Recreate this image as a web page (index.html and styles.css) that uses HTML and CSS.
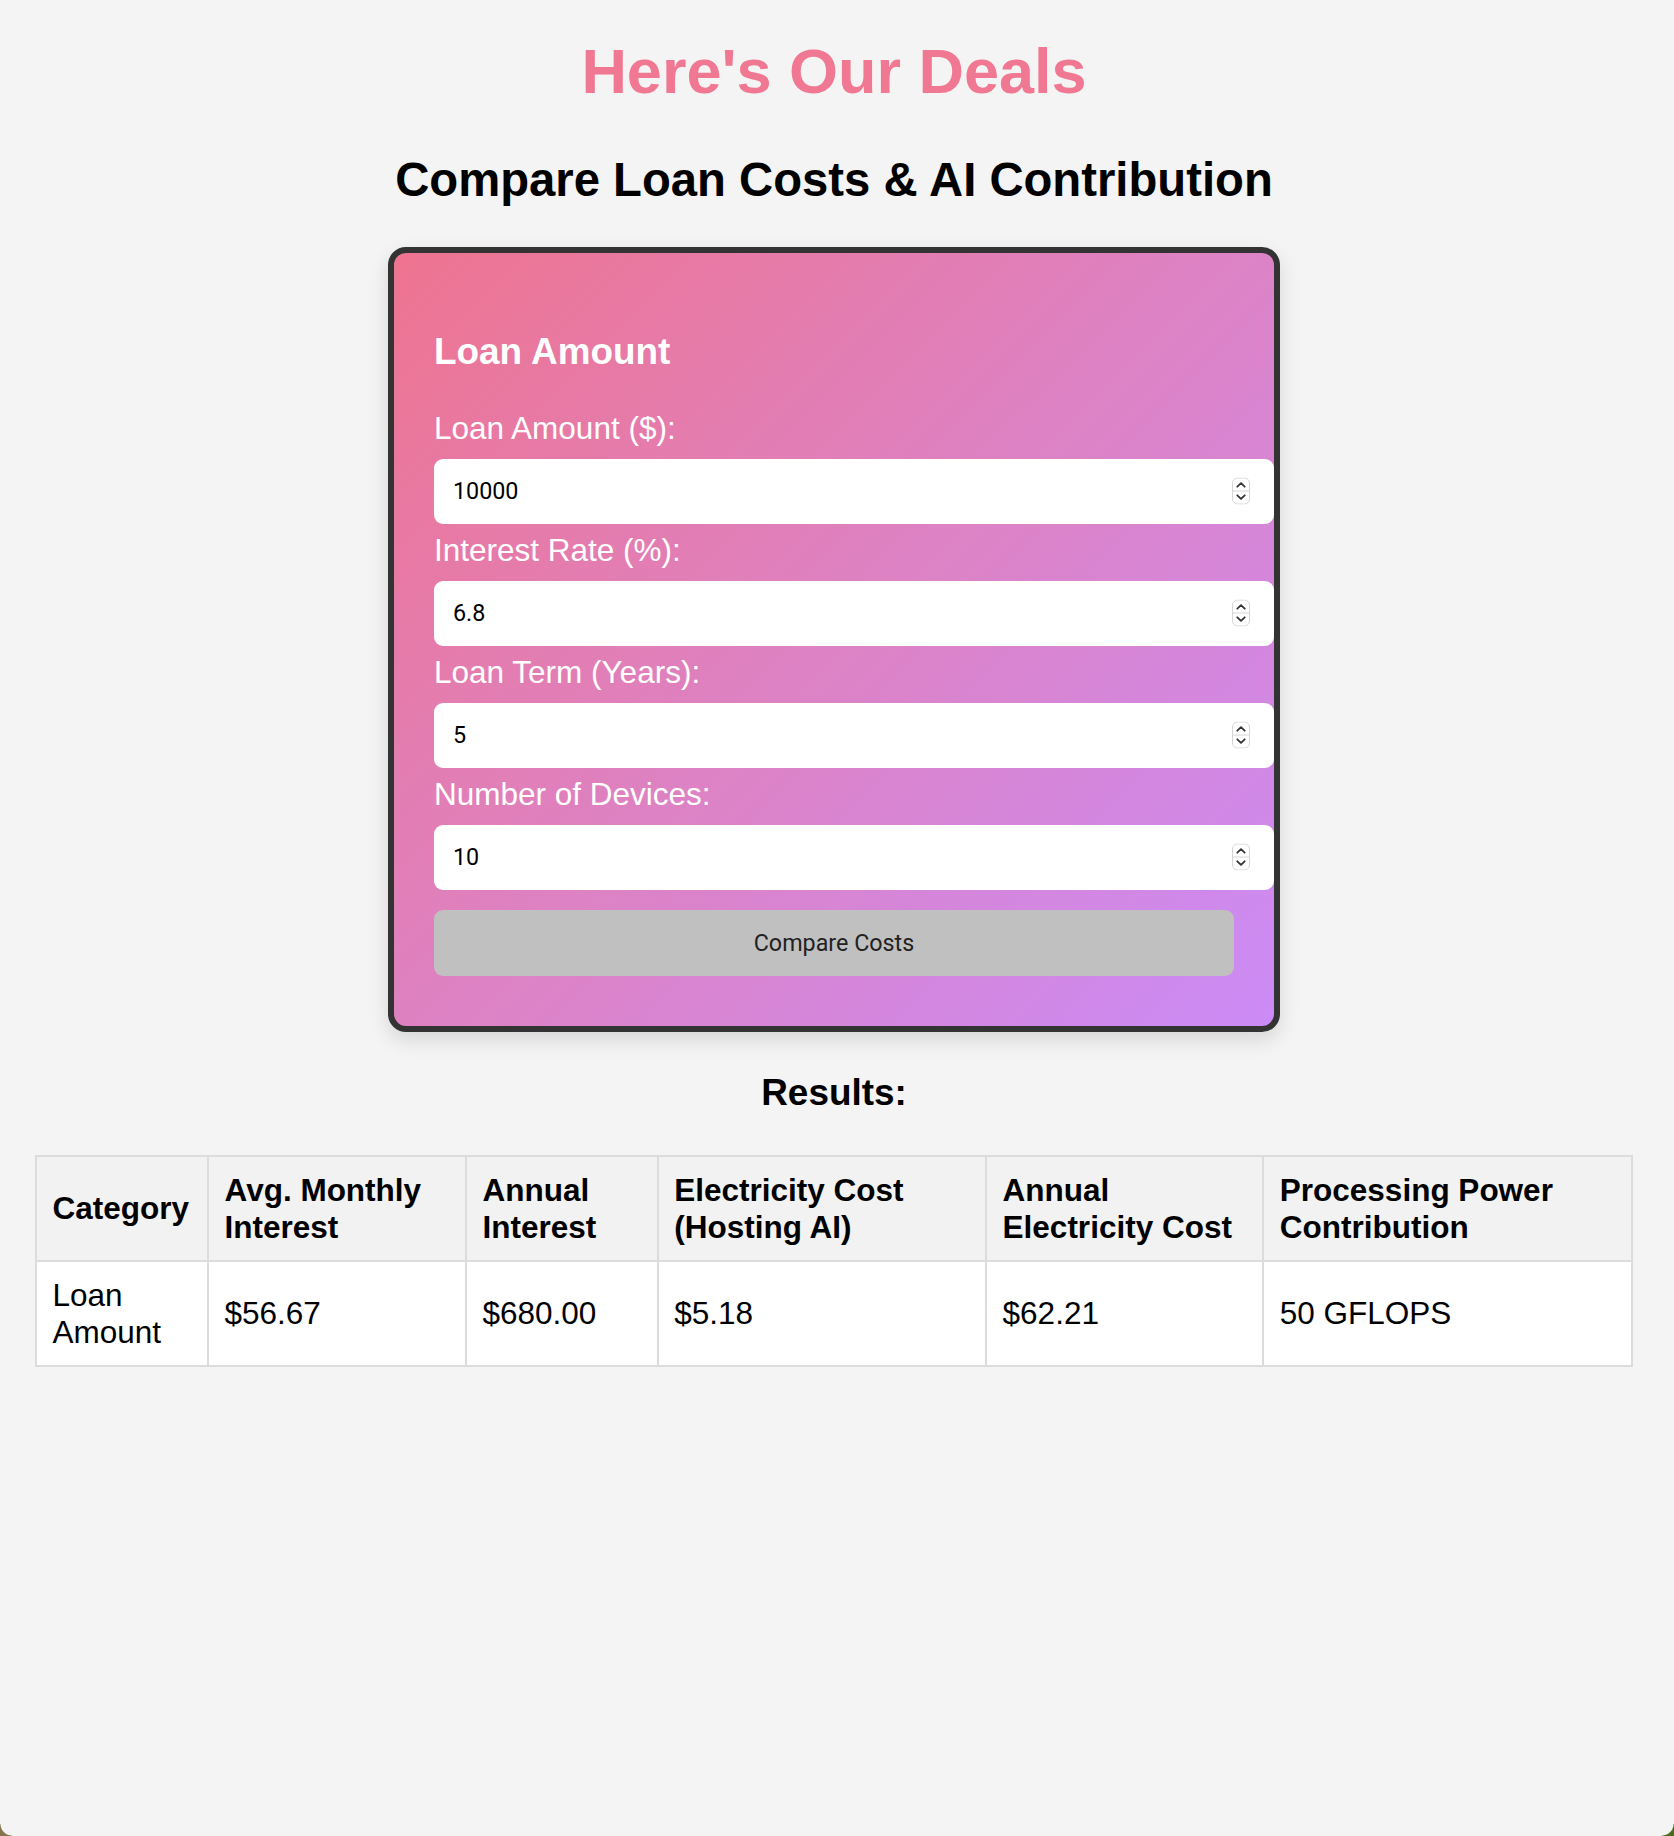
FILE: index.html
```html
<!DOCTYPE html>
<html lang="en">
<head>
<meta charset="utf-8">
<title>Here's Our Deals</title>
<link rel="stylesheet" href="styles.css">
</head>
<body>
  <h1 class="title">Here's Our Deals</h1>
  <h2 class="subtitle">Compare Loan Costs &amp; AI Contribution</h2>

  <div class="card">
    <h3 class="card-title">Loan Amount</h3>

    <label class="label" for="amount">Loan Amount ($):</label>
    <div class="field">
      <input class="input" id="amount" type="number" value="10000">
      <svg class="spin" viewBox="0 0 18 27" width="18" height="27" aria-hidden="true">
        <rect x="0.5" y="0.5" width="17" height="26" rx="5" fill="#fff" stroke="#d6d6d6"/>
        <line x1="1" y1="13.5" x2="17" y2="13.5" stroke="#d6d6d6"/>
        <path d="M5.3 9.2 L9 5.6 L12.7 9.2" fill="none" stroke="#333" stroke-width="1.8" stroke-linecap="round" stroke-linejoin="round"/>
        <path d="M5.3 17.8 L9 21.4 L12.7 17.8" fill="none" stroke="#333" stroke-width="1.8" stroke-linecap="round" stroke-linejoin="round"/>
      </svg>
    </div>

    <label class="label" for="rate">Interest Rate (%):</label>
    <div class="field">
      <input class="input" id="rate" type="number" value="6.8">
      <svg class="spin" viewBox="0 0 18 27" width="18" height="27" aria-hidden="true">
        <rect x="0.5" y="0.5" width="17" height="26" rx="5" fill="#fff" stroke="#d6d6d6"/>
        <line x1="1" y1="13.5" x2="17" y2="13.5" stroke="#d6d6d6"/>
        <path d="M5.3 9.2 L9 5.6 L12.7 9.2" fill="none" stroke="#333" stroke-width="1.8" stroke-linecap="round" stroke-linejoin="round"/>
        <path d="M5.3 17.8 L9 21.4 L12.7 17.8" fill="none" stroke="#333" stroke-width="1.8" stroke-linecap="round" stroke-linejoin="round"/>
      </svg>
    </div>

    <label class="label" for="term">Loan Term (Years):</label>
    <div class="field">
      <input class="input" id="term" type="number" value="5">
      <svg class="spin" viewBox="0 0 18 27" width="18" height="27" aria-hidden="true">
        <rect x="0.5" y="0.5" width="17" height="26" rx="5" fill="#fff" stroke="#d6d6d6"/>
        <line x1="1" y1="13.5" x2="17" y2="13.5" stroke="#d6d6d6"/>
        <path d="M5.3 9.2 L9 5.6 L12.7 9.2" fill="none" stroke="#333" stroke-width="1.8" stroke-linecap="round" stroke-linejoin="round"/>
        <path d="M5.3 17.8 L9 21.4 L12.7 17.8" fill="none" stroke="#333" stroke-width="1.8" stroke-linecap="round" stroke-linejoin="round"/>
      </svg>
    </div>

    <label class="label" for="devices">Number of Devices:</label>
    <div class="field">
      <input class="input" id="devices" type="number" value="10">
      <svg class="spin" viewBox="0 0 18 27" width="18" height="27" aria-hidden="true">
        <rect x="0.5" y="0.5" width="17" height="26" rx="5" fill="#fff" stroke="#d6d6d6"/>
        <line x1="1" y1="13.5" x2="17" y2="13.5" stroke="#d6d6d6"/>
        <path d="M5.3 9.2 L9 5.6 L12.7 9.2" fill="none" stroke="#333" stroke-width="1.8" stroke-linecap="round" stroke-linejoin="round"/>
        <path d="M5.3 17.8 L9 21.4 L12.7 17.8" fill="none" stroke="#333" stroke-width="1.8" stroke-linecap="round" stroke-linejoin="round"/>
      </svg>
    </div>

    <button class="button" type="button">Compare Costs</button>
  </div>

  <h3 class="results-title">Results:</h3>

  <table class="results">
    <colgroup>
      <col class="col-category">
      <col class="col-monthly">
      <col class="col-annual">
      <col class="col-elec">
      <col class="col-annual-elec">
      <col class="col-power">
    </colgroup>
    <thead>
      <tr>
        <th>Category</th>
        <th>Avg. Monthly Interest</th>
        <th>Annual Interest</th>
        <th>Electricity Cost (Hosting AI)</th>
        <th>Annual Electricity Cost</th>
        <th>Processing Power Contribution</th>
      </tr>
    </thead>
    <tbody>
      <tr>
        <td>Loan Amount</td>
        <td>$56.67</td>
        <td>$680.00</td>
        <td>$5.18</td>
        <td>$62.21</td>
        <td>50 GFLOPS</td>
      </tr>
    </tbody>
  </table>

  <div class="corner corner-left"></div>
  <div class="corner corner-right"></div>
</body>
</html>
```

FILE: styles.css
```css
* {
  box-sizing: border-box;
}

html, body {
  height: 100%;
}

body {
  margin: 0;
  padding: 0 41px 0 35px;
  background: #f4f4f4;
  font-family: "Liberation Sans", Arial, Helvetica, sans-serif;
  font-size: 31.5px;
  color: #000;
}

.title {
  margin: 35px 0 0;
  font-size: 63px;
  font-weight: bold;
  text-align: center;
  color: #f07892;
}

.subtitle {
  margin: 45px 0 40px;
  font-size: 47.25px;
  font-weight: bold;
  text-align: center;
}

.card {
  width: 892px;
  margin: 0 auto;
  padding: 40px;
  border: 6px solid #333;
  border-radius: 18px;
  background: linear-gradient(135deg, #ee7490 0%, #dd82c4 50%, #cb8bf6 100%);
  box-shadow: 0 8px 20px rgba(0, 0, 0, 0.12);
}

.card-title {
  margin: 38px 0 37px;
  font-size: 36.9px;
  font-weight: bold;
  color: #fff;
}

.label {
  display: block;
  margin-bottom: 12.5px;
  font-size: 31.5px;
  line-height: 36px;
  color: #fff;
}

.field {
  position: relative;
  width: calc(100% + 40px);
  margin-bottom: 8px;
}

.input {
  display: block;
  width: 100%;
  height: 65.5px;
  padding: 0 19px;
  border: none;
  border-radius: 9px;
  background: #fff;
  font-family: Roboto, "Noto Sans", sans-serif;
  font-size: 23.3px;
  color: #000;
  outline: none;
  -moz-appearance: textfield;
}

.input::-webkit-inner-spin-button,
.input::-webkit-outer-spin-button {
  -webkit-appearance: none;
  margin: 0;
}

.spin {
  position: absolute;
  right: 24px;
  top: 50%;
  transform: translateY(-50%);
}

.button {
  display: block;
  width: 100%;
  height: 66px;
  margin: 20px 0 10px;
  border: none;
  border-radius: 9px;
  background: #c0c0c0;
  font-family: Roboto, "Noto Sans", sans-serif;
  font-size: 23.3px;
  color: #222;
}

.results-title {
  margin: 40px 0 41px;
  font-size: 36.9px;
  font-weight: bold;
  text-align: center;
}

.results {
  width: 100%;
  border-collapse: collapse;
  table-layout: fixed;
}

.col-category { width: 10.78%; }
.col-monthly { width: 16.16%; }
.col-annual { width: 12.02%; }
.col-elec { width: 20.57%; }
.col-annual-elec { width: 17.37%; }
.col-power { width: 23.10%; }

.results th,
.results td {
  padding: 14.5px 15.5px;
  border: 2px solid #dcdcdc;
  text-align: left;
  vertical-align: middle;
}

.results th {
  background: #f2f2f2;
  font-weight: bold;
}

.results td {
  background: #fff;
}

.corner {
  position: fixed;
  bottom: 0;
  width: 12px;
  height: 12px;
}

.corner-left {
  left: 0;
  background: radial-gradient(circle at 100% 0, transparent 11px, #86744f 12px);
}

.corner-right {
  right: 0;
  background: radial-gradient(circle at 0 0, transparent 11px, #4b6a1e 12px);
}
```
